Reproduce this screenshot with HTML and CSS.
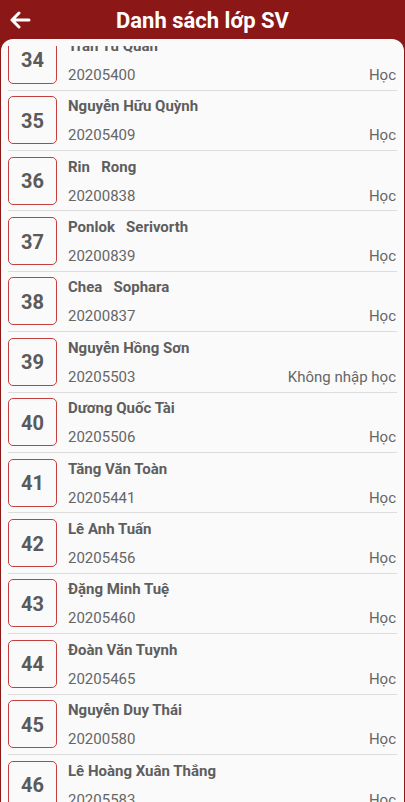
FILE: index.html
```html
<!DOCTYPE html>
<html lang="vi">
<head>
<meta charset="utf-8">
<title>Danh sách lớp SV</title>
<link rel="stylesheet" href="styles.css">
</head>
<body>
<header class="topbar">
  <svg class="back" width="22" height="18" viewBox="0 0 22 18" aria-hidden="true">
    <path d="M20 9H3.5M10 2L3 9l7 7" fill="none" stroke="#fff" stroke-width="3" stroke-linecap="round" stroke-linejoin="round"/>
  </svg>
  <h1 class="title">Danh sách lớp SV</h1>
</header>
<main class="card">
  <div class="viewport">
    <ul class="list">
      <li class="row"><div class="num">34</div><div class="info"><div class="name">Trần Tú Quân</div><div class="line"><span class="id">20205400</span><span class="status">Học</span></div></div></li>
      <li class="row"><div class="num">35</div><div class="info"><div class="name">Nguyễn Hữu Quỳnh</div><div class="line"><span class="id">20205409</span><span class="status">Học</span></div></div></li>
      <li class="row"><div class="num">36</div><div class="info"><div class="name">Rin   Rong</div><div class="line"><span class="id">20200838</span><span class="status">Học</span></div></div></li>
      <li class="row"><div class="num">37</div><div class="info"><div class="name">Ponlok   Serivorth</div><div class="line"><span class="id">20200839</span><span class="status">Học</span></div></div></li>
      <li class="row"><div class="num">38</div><div class="info"><div class="name">Chea   Sophara</div><div class="line"><span class="id">20200837</span><span class="status">Học</span></div></div></li>
      <li class="row"><div class="num">39</div><div class="info"><div class="name">Nguyễn Hồng Sơn</div><div class="line"><span class="id">20205503</span><span class="status">Không nhập học</span></div></div></li>
      <li class="row"><div class="num">40</div><div class="info"><div class="name">Dương Quốc Tài</div><div class="line"><span class="id">20205506</span><span class="status">Học</span></div></div></li>
      <li class="row"><div class="num">41</div><div class="info"><div class="name">Tăng Văn Toàn</div><div class="line"><span class="id">20205441</span><span class="status">Học</span></div></div></li>
      <li class="row"><div class="num">42</div><div class="info"><div class="name">Lê Anh Tuấn</div><div class="line"><span class="id">20205456</span><span class="status">Học</span></div></div></li>
      <li class="row"><div class="num">43</div><div class="info"><div class="name">Đặng Minh Tuệ</div><div class="line"><span class="id">20205460</span><span class="status">Học</span></div></div></li>
      <li class="row"><div class="num">44</div><div class="info"><div class="name">Đoàn Văn Tuynh</div><div class="line"><span class="id">20205465</span><span class="status">Học</span></div></div></li>
      <li class="row"><div class="num">45</div><div class="info"><div class="name">Nguyễn Duy Thái</div><div class="line"><span class="id">20200580</span><span class="status">Học</span></div></div></li>
      <li class="row"><div class="num">46</div><div class="info"><div class="name">Lê Hoàng Xuân Thắng</div><div class="line"><span class="id">20205583</span><span class="status">Học</span></div></div></li>
    </ul>
  </div>
</main>
</body>
</html>
```
FILE: styles.css
```css
* { box-sizing: border-box; }
html, body {
  margin: 0;
  padding: 0;
  height: 100%;
  overflow: hidden;
}
body {
  background: #8c1717;
  font-family: Roboto, "Noto Sans", sans-serif;
  display: flex;
  flex-direction: column;
}
.topbar {
  height: 39px;
  flex: none;
  display: flex;
  align-items: center;
  justify-content: center;
  position: relative;
}
.back {
  position: absolute;
  left: 9px;
  top: 11px;
}
.title {
  margin: 0;
  color: #fff;
  font-size: 22px;
  font-weight: 700;
  line-height: 1;
  padding-top: 2px;
}
.card {
  flex: 1;
  margin: 0 1px;
  background: #fafafa;
  border-radius: 12px 12px 0 0;
  padding-top: 7px;
  overflow: hidden;
}
.viewport {
  height: 100%;
  overflow: hidden;
}
.list {
  list-style: none;
  margin: -15.7px 7px 0 7px;
  padding: 0;
}
.row {
  display: flex;
  align-items: stretch;
  gap: 11px;
  height: 60.4px;
  padding: 5.6px 0 5.8px;
  border-bottom: 1px solid #dcdcdc;
}
.num {
  flex: none;
  width: 49px;
  height: 48px;
  border: 1px solid #c4403f;
  border-radius: 5px;
  display: flex;
  align-items: center;
  justify-content: center;
  color: #5a5a5a;
  font-size: 20px;
  font-weight: 700;
  padding-top: 1px;
}
.info {
  flex: 1;
  display: flex;
  flex-direction: column;
  justify-content: space-between;
  padding: 0 1px 0 0;
}
.name {
  white-space: pre;
  color: #5e5e5e;
  font-size: 15px;
  font-weight: 700;
  line-height: 20px;
}
.line {
  display: flex;
  justify-content: space-between;
  align-items: baseline;
  font-size: 15px;
  line-height: 17px;
  color: #666;
}
```
